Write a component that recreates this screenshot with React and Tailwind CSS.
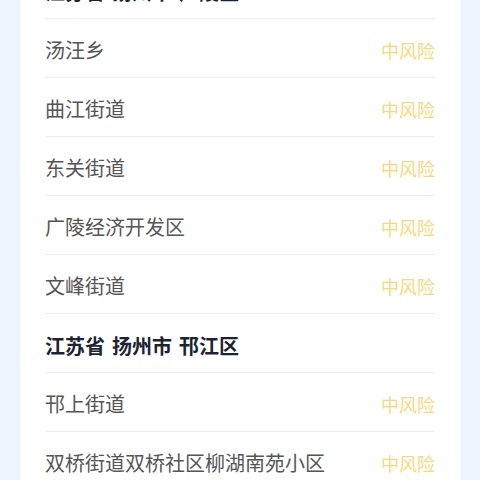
const groups = [
  {
    title: ["江苏省", "扬州市", "广陵区"],
    items: ["汤汪乡", "曲江街道", "东关街道", "广陵经济开发区", "文峰街道"],
  },
  {
    title: ["江苏省", "扬州市", "邗江区"],
    items: ["邗上街道", "双桥街道双桥社区柳湖南苑小区", "蒋王街道"],
  },
];

function Row({ name }) {
  return (
    <div className="flex items-center justify-between h-[59px] border-b border-[#ededed] pt-[6px]">
      <span className="text-[20px] text-[#555555]">{name}</span>
      <span className="text-[18px] text-[#f4d97c]">中风险</span>
    </div>
  );
}

export default function App() {
  return (
    <div
      className="h-[480px] overflow-hidden bg-[#edf5fc]"
      style={{ fontFamily: '"Noto Sans", "Noto Sans CJK SC", sans-serif' }}
    >
      <div className="mx-[20px] w-[441px] -mt-[40px] bg-white px-[25px] pr-[26px]">
        {groups.map((g) => (
          <div key={g.title.join("")}>
            <div className="flex items-center gap-[7px] h-[59px] border-b border-[#ededed] pt-[7px]">
              {g.title.map((t) => (
                <span key={t} className="text-[20px] font-bold text-[#1a2433]">{t}</span>
              ))}
            </div>
            {g.items.map((it) => (
              <Row key={it} name={it} />
            ))}
          </div>
        ))}
      </div>
    </div>
  );
}
